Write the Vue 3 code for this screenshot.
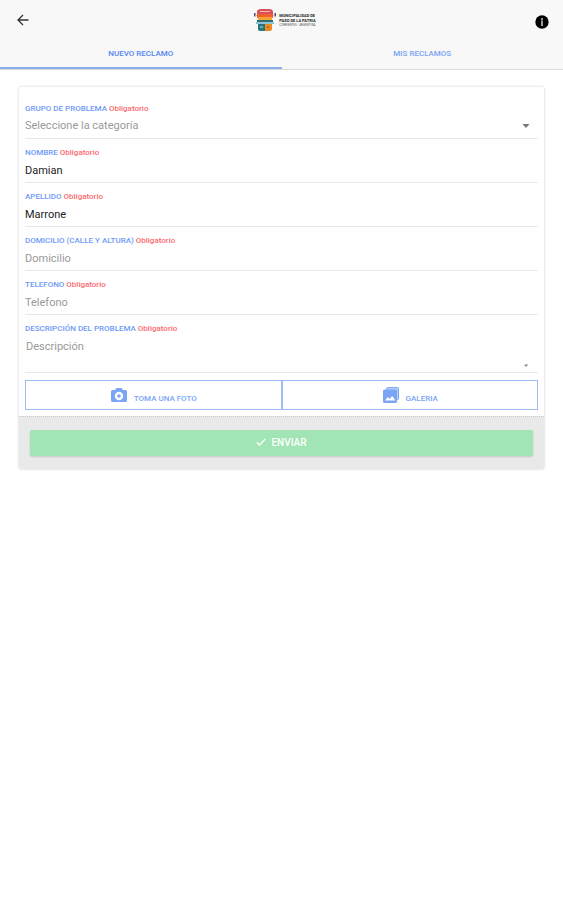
<script setup>
import {ref} from 'vue'

let tab=ref('nuevo')
let categoria=ref('')
let descripcion=ref('')

let campos=ref([
  {id:'nombre',label:'NOMBRE',placeholder:'Nombre',type:'text',value:'Damian'},
  {id:'apellido',label:'APELLIDO',placeholder:'Apellido',type:'text',value:'Marrone'},
  {id:'domicilio',label:'DOMICILIO (CALLE Y ALTURA)',placeholder:'Domicilio',type:'text',value:''},
  {id:'telefono',label:'TELEFONO',placeholder:'Telefono',type:'tel',value:''}
])
</script>

<template>
<header class="header">
  <div class="toolbar">
    <button class="icon-btn" type="button" aria-label="Volver">
      <svg class="back-icon" viewBox="0 0 12 12"><path d="M11.5 6H1M6 1L1 6l5 5" /></svg>
    </button>
    <div class="brand">
      <svg class="brand-logo" viewBox="0 0 24 24">
        <path fill="#3d4f78" d="M1 5h1.500v3.500H1zM21.500 5H23v3.500h-1.500z" />
        <path fill="#e8a0a0" d="M2.500 7H4v1H2.500zM20 7h1.500v1H20z" />
        <path fill="#d9505c" d="M4 4q0-3 4-3h8q4 0 4 3v2H4z" />
        <path fill="#f3b9a8" d="M7 3h10v1H7z" />
        <path fill="#f0612c" d="M4 6h16v4H4z" />
        <path fill="#f7a234" d="M5 9h14v3H5z" />
        <path fill="#2f6f70" d="M4 12h16v3H4z" />
        <path fill="#8fc3d6" d="M3 14h18v2H3z" />
        <path fill="#25777c" d="M5 16h7v7H7q-2 0-2-2z" />
        <path fill="#ee8a22" d="M12 16h7v5q0 2-2 2h-5z" />
        <path fill="#5fb0a4" d="M7 18h3v2H7z" />
        <path fill="#c9662b" d="M14 18h2v2h-2z" />
      </svg>
      <div class="brand-txt">
        <strong>MUNICIPALIDAD DE</strong>
        <strong>PASO DE LA PATRIA</strong>
        <span>CORRIENTES - ARGENTINA</span>
      </div>
    </div>
    <button class="icon-btn info-btn" type="button" aria-label="Información">
      <svg class="info-icon" viewBox="0 0 14 14">
        <circle cx="7" cy="7" r="6.7" fill="#000" />
        <path fill="#999" d="M6 3h2v2H6zM6 5.600h2V11H6z" />
      </svg>
    </button>
  </div>
  <nav class="tabs">
    <button class="tab" :class="{active:tab=='nuevo'}" type="button" @click="tab='nuevo'">NUEVO RECLAMO</button>
    <button class="tab" :class="{active:tab=='mis'}" type="button" @click="tab='mis'">MIS RECLAMOS</button>
  </nav>
</header>

<main class="content">
  <form class="card" @submit.prevent>
    <div class="fields">
      <div class="item">
        <label class="item-label" for="categoria">GRUPO DE PROBLEMA <span class="required">Obligatorio</span></label>
        <div class="select-box">
          <select id="categoria" class="control" :class="{empty:!categoria}" v-model="categoria">
            <option value="">Seleccione la categoría</option>
          </select>
          <svg class="select-arrow" viewBox="0 0 8 4"><path fill="#777" d="M0.500 0h7L4 4z" /></svg>
        </div>
      </div>

      <div class="item" v-for="i in campos" :key="i.id">
        <label class="item-label" :for="i.id">{{i.label}} <span class="required">Obligatorio</span></label>
        <input :id="i.id" class="control" :type="i.type" :placeholder="i.placeholder" v-model="i.value">
      </div>

      <div class="item">
        <label class="item-label" for="descripcion">DESCRIPCIÓN DEL PROBLEMA <span class="required">Obligatorio</span></label>
        <div class="area-box">
          <textarea id="descripcion" class="control area" placeholder="Descripción" v-model="descripcion"></textarea>
          <svg class="area-mark" viewBox="0 0 4 3"><path fill="#999" d="M0 1l3-1 1 1-2 2z" /></svg>
        </div>
      </div>

      <div class="photo-btns">
        <button class="photo-btn" type="button">
          <svg class="photo-icon" viewBox="0 0 18 18">
            <path fill="currentColor" fill-rule="evenodd" d="M6.500 2L5 4H2.500Q1 4 1 5.500v9Q1 16 2.500 16h13q1.500 0 1.500-1.500v-9Q17 4 15.500 4H13l-1.500-2zM9 5.800a4.200 4.200 0 1 1 0 8.400a4.200 4.200 0 1 1 0-8.400zM9 8.200a1.800 1.800 0 1 0 0 3.600a1.800 1.800 0 1 0 0-3.600z" />
          </svg>
          <span class="photo-txt">TOMA UNA FOTO</span>
        </button>
        <button class="photo-btn" type="button">
          <svg class="photo-icon" viewBox="0 0 18 18">
            <path fill="#b5cffb" stroke="currentColor" d="M4.500 3.500V2.600q0-1 1-1h10q1 0 1 1v10q0 1-1 1h-.700z" />
            <path fill="currentColor" fill-rule="evenodd" d="M2.500 3.500h11q1.500 0 1.500 1.500v10.500q0 1.500-1.500 1.500h-11Q1 17 1 15.500V5q0-1.500 1.500-1.500zM3 14.500h10.500l-3.300-4.500-2.500 3-1.800-1.900z" />
          </svg>
          <span class="photo-txt">GALERIA</span>
        </button>
      </div>
    </div>

    <div class="card-footer">
      <button class="send-btn" type="submit" disabled>
        <svg class="check-icon" viewBox="0 0 10 8"><path d="M0.700 4.200l2.800 2.800L9.300 1" /></svg>
        ENVIAR
      </button>
    </div>
  </form>
</main>
</template>

<style>
body{
  margin: 0;
  background: #fff;
  font-family: Roboto, "Liberation Sans", sans-serif;
}
</style>

<style scoped>
*{
  box-sizing: border-box;
}
button,input,select,textarea{
  margin: 0;
  padding: 0;
  border: none;
  background: none;
  font-family: inherit;
  outline: none;
}
svg{
  display: block;
}
.header{
  background: #f8f8f8;
  border-bottom: 1px solid #dcdcdc;
}
.toolbar{
  height: 40px;
  padding: 0 14px 0 16px;
  display: flex;
  justify-content: space-between;
  align-items: center;
}
.icon-btn{
  width: 14px;
  height: 40px;
  display: flex;
  align-items: center;
}
.info-btn{
  padding-top: 4px;
}
.back-icon{
  width: 12px;
  height: 12px;
  margin-left: 1px;
  fill: none;
  stroke: #333;
  stroke-width: 1.3;
}
.info-icon{
  width: 14px;
  height: 14px;
}
.brand{
  display: flex;
  align-items: center;
  gap: 2px;
  padding-left: 4px;
}
.brand-logo{
  width: 24px;
  height: 24px;
}
.brand-txt{
  display: flex;
  flex-direction: column;
  font-size: 4px;
  line-height: 5px;
  color: #222;
}
.brand-txt span{
  font-size: 3px;
  color: #555;
}
.tabs{
  display: flex;
}
.tab{
  flex: 1;
  height: 29px;
  border-bottom: 2px solid transparent;
  font-size: 8px;
  font-weight: 500;
  color: #7ba3f5;
}
.tab.active{
  color: #5585f2;
  border-bottom-color: #8aaeea;
}
.content{
  padding: 17px 19px;
}
.card{
  border-radius: 2px;
  box-shadow: 0 0 3px rgba(0,0,0,0.2);
}
.fields{
  padding: 8px 6px 6px;
}
.item{
  padding-top: 8px;
  border-bottom: 1px solid #e8e8e8;
}
.item-label{
  display: block;
  font-size: 8px;
  font-weight: 500;
  line-height: 11px;
  color: #6e9af7;
}
.required{
  color: #fc6b70;
}
.control{
  display: block;
  width: 100%;
  height: 24px;
  font-size: 11px;
  line-height: 16px;
  color: #222;
}
.control::placeholder{
  color: #999;
  opacity: 1;
}
.control.empty{
  color: #999;
}
.select-box{
  display: flex;
  align-items: center;
  padding-right: 8px;
}
select.control{
  flex: 1;
  appearance: none;
}
.select-arrow{
  width: 8px;
  height: 4px;
}
.area-box{
  display: flex;
  align-items: flex-end;
  padding: 0 10px 0 1px;
}
.control.area{
  flex: 1;
  height: 38px;
  padding-top: 5px;
  resize: none;
}
.area-mark{
  width: 4px;
  height: 3px;
  margin-bottom: 5px;
}
.photo-btns{
  display: flex;
  margin-top: 7px;
}
.photo-btn{
  flex: 1;
  height: 30px;
  display: flex;
  justify-content: center;
  align-items: center;
  gap: 6px;
  border: 1px solid #9dbcf8;
  color: #7aa5f7;
}
.photo-icon{
  width: 18px;
  height: 18px;
}
.photo-txt{
  padding-top: 7px;
  font-size: 8px;
  font-weight: 500;
  line-height: 12px;
}
.card-footer{
  padding: 13px 11px;
  background: #e9e9e9;
  border-top: 1px dotted #c8c8c8;
}
.send-btn{
  width: 100%;
  height: 26px;
  padding-bottom: 2px;
  display: flex;
  justify-content: center;
  align-items: center;
  gap: 5px;
  border-radius: 2px;
  background: #a1e5b4;
  box-shadow: 0 1px 2px rgba(0,0,0,0.15);
  color: #fff;
  font-size: 10px;
  font-weight: 500;
}
.check-icon{
  width: 10px;
  height: 8px;
  fill: none;
  stroke: #fff;
  stroke-width: 1.3;
}
</style>
